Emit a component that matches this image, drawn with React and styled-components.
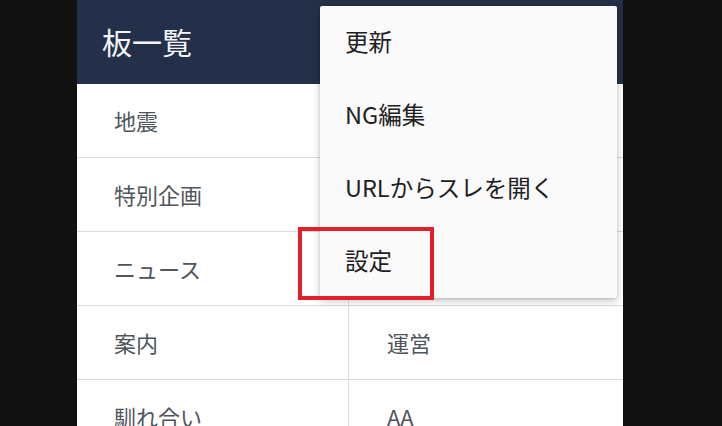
import React from 'react';
import styled, { createGlobalStyle } from 'styled-components';

const GlobalStyle = createGlobalStyle`
  html, body {
    margin: 0;
    padding: 0;
    background: #111111;
    font-family: "Noto Sans CJK JP", "Noto Sans", sans-serif;
  }
  * { box-sizing: border-box; }
`;

const Page = styled.div`
  width: 722px;
  height: 426px;
  overflow: hidden;
  padding-left: 77px;
  background: #111111;
`;

const Screen = styled.div`
  position: relative;
  width: 546px;
  height: 426px;
  background: #ffffff;
  display: flex;
  flex-direction: column;
`;

const Header = styled.header`
  height: 84px;
  flex-shrink: 0;
  background: #243049;
  display: flex;
  align-items: center;
  padding-left: 25px;
  padding-bottom: 2px;
`;

const Title = styled.h1`
  margin: 0;
  font-size: 30px;
  font-weight: 400;
  color: #f2f4f7;
`;

const BoardGrid = styled.div`
  display: grid;
  grid-template-columns: 272px 1fr;
  grid-auto-rows: 74px;
`;

const Cell = styled.div`
  display: flex;
  align-items: center;
  padding-left: ${p => (p.$right ? '38px' : '37px')};
  padding-bottom: 2px;
  border-bottom: 1px solid #dcdcdc;
  border-right: ${p => (p.$right ? 'none' : '1px solid #dcdcdc')};
  font-size: 22px;
  color: #50555b;
`;

const Menu = styled.div`
  position: absolute;
  top: 6px;
  left: 243px;
  width: 297px;
  background: #fafafa;
  border-radius: 2px;
  box-shadow: 0 3px 8px rgba(0, 0, 0, 0.22), 0 1px 3px rgba(0, 0, 0, 0.12);
  display: flex;
  flex-direction: column;
`;

const MenuItem = styled.div`
  height: 73px;
  display: flex;
  align-items: center;
  padding-left: 25px;
  padding-bottom: 3px;
  font-size: 23.5px;
  color: #212121;
`;

const Highlight = styled.div`
  position: absolute;
  top: 227px;
  left: 221px;
  width: 136px;
  height: 73px;
  border: 4px solid #e0202a;
`;

// right-hand boards of the first rows sit under the open menu
const boards = [
  ['地震', ''],
  ['特別企画', ''],
  ['ニュース', ''],
  ['案内', '運営'],
  ['馴れ合い', 'AA'],
];

const menuItems = ['更新', 'NG編集', 'URLからスレを開く', '設定'];

export default function App() {
  return (
    <Page>
      <GlobalStyle />
      <Screen>
        <Header>
          <Title>板一覧</Title>
        </Header>
        <BoardGrid>
          {boards.map(([left, right]) => (
            <React.Fragment key={left}>
              <Cell>{left}</Cell>
              <Cell $right>{right}</Cell>
            </React.Fragment>
          ))}
        </BoardGrid>
        <Menu>
          {menuItems.map(item => (
            <MenuItem key={item}>{item}</MenuItem>
          ))}
        </Menu>
        <Highlight />
      </Screen>
    </Page>
  );
}
